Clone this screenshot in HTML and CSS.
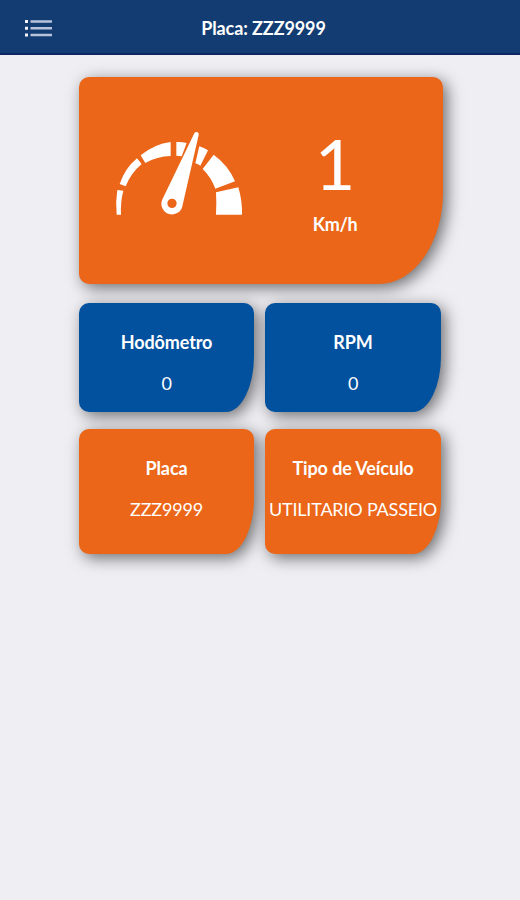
FILE: index.html
```
<!DOCTYPE html>
<html lang="pt-BR">
<head>
    <meta charset="UTF-8">
    <meta name="viewport" content="width=device-width, initial-scale=1.0">
    <title>Placa: ZZZ9999</title>
    <link rel="stylesheet" href="styles.css">
</head>
<body>
    <header class="topbar">
        <button class="menu-btn" aria-label="Menu">
            <svg width="28" height="18" viewBox="0 0 28 18">
                <path class="menu-dots" d="M1 1h3v3h-3zM1 7.7h3v3h-3zM1 14.4h3v3h-3z"/>
                <path class="menu-lines" d="M6.5 1.2H28v2.5H6.5zM6.5 8H28v2.5H6.5zM6.5 14.8H28v2.5H6.5z"/>
            </svg>
        </button>
        <h1>Placa: ZZZ9999</h1>
    </header>

    <main class="dashboard">
        <section class="card card-speed">
            <svg class="gauge" width="150" height="105" viewBox="0 0 450 315">
                <!-- dial segments -->
                <path d="M37 210L55 212Q46 246 48 284L35 284Q31 246 37 210Z"/>
                <path d="M44 192Q60 145 96 115L110 132Q77 160 62 199Z"/>
                <path d="M107 106Q148 72 197 66L197 108Q156 109 121 129Z"/>
                <path d="M214 66Q229 65 245 69L230 109Q222 107 214 107Z"/>
                <path d="M283 79Q297 83 309 91L286 137Q279 132 271 130Z"/>
                <path d="M326 104Q370 136 390 184L331 206Q318 171 293 147Z"/>
                <path d="M333 217L400 202Q412 242 411 284L333 284Q335 248 333 217Z"/>
                <!-- needle -->
                <path fill-rule="evenodd" d="M268 40Q272 34 278 37Q282 39 281 45L233 254A32 32 0 1 1 173 236ZM201 236A14 14 0 1 0 201 264A14 14 0 1 0 201 236Z"/>
            </svg>
            <div class="speed">
                <span class="speed-value">1</span>
                <span class="speed-unit">Km/h</span>
            </div>
        </section>

        <div class="card-grid">
            <section class="card card-blue">
                <h2>Hodômetro</h2>
                <p>0</p>
            </section>
            <section class="card card-blue">
                <h2>RPM</h2>
                <p>0</p>
            </section>
            <section class="card card-orange">
                <h2>Placa</h2>
                <p>ZZZ9999</p>
            </section>
            <section class="card card-orange">
                <h2>Tipo de Veículo</h2>
                <p>UTILITARIO PASSEIO</p>
            </section>
        </div>
    </main>
</body>
</html>
```
FILE: styles.css
```
* {
    margin: 0;
    padding: 0;
    box-sizing: border-box;
}

body {
    font-family: Lato, 'Open Sans', sans-serif;
    background: #efeef3;
    min-height: 100vh;
    color: white;
}

.topbar {
    height: 55px;
    background: #123c72;
    border-bottom: 2px solid #0c2565;
    display: grid;
    grid-template-columns: 80px 1fr 73px;
    align-items: center;
}

.topbar h1 {
    font-size: 18px;
    line-height: 22px;
    font-weight: 700;
    letter-spacing: -0.1px;
    text-align: center;
    padding-top: 2px;
}

.menu-btn {
    background: none;
    border: none;
    padding: 3px 0 0 24px;
    display: flex;
    cursor: pointer;
}

.menu-dots {
    fill: #f4f5fb;
}

.menu-lines {
    fill: #b9c2da;
}

.dashboard {
    width: 364px;
    margin: 22px 0 0 79px;
}

.card {
    border-radius: 10px 10px 28px 10px / 10px 10px 56px 10px;
    box-shadow: 4px 4px 16px rgba(0, 0, 0, 0.55);
    text-align: center;
    white-space: nowrap;
}

.card-speed {
    height: 207px;
    background: #eb6618;
    border-radius: 10px 10px 64px 10px / 10px 10px 92px 10px;
    display: flex;
    padding: 43px 0 0 26px;
}

.gauge {
    fill: white;
    flex-shrink: 0;
}

.speed {
    width: 160px;
    display: flex;
    flex-direction: column;
}

.speed-value {
    font-size: 70px;
    line-height: 84px;
    padding-top: 1px;
}

.speed-unit {
    font-size: 18px;
    line-height: 22px;
    font-weight: 700;
    letter-spacing: -0.4px;
    margin-top: 8px;
}

.card-grid {
    display: grid;
    grid-template-columns: 175px 176px;
    grid-template-rows: 109px 125px;
    column-gap: 11px;
    row-gap: 17px;
    margin-top: 19px;
}

.card-blue {
    background: #01519e;
}

.card-orange {
    background: #eb6618;
}

.card-grid .card {
    padding-top: 28px;
}

.card h2 {
    font-size: 18px;
    line-height: 22px;
    font-weight: 700;
    letter-spacing: -0.1px;
}

.card p {
    font-size: 18px;
    line-height: 22px;
    letter-spacing: -0.2px;
    margin-top: 19px;
}
```
